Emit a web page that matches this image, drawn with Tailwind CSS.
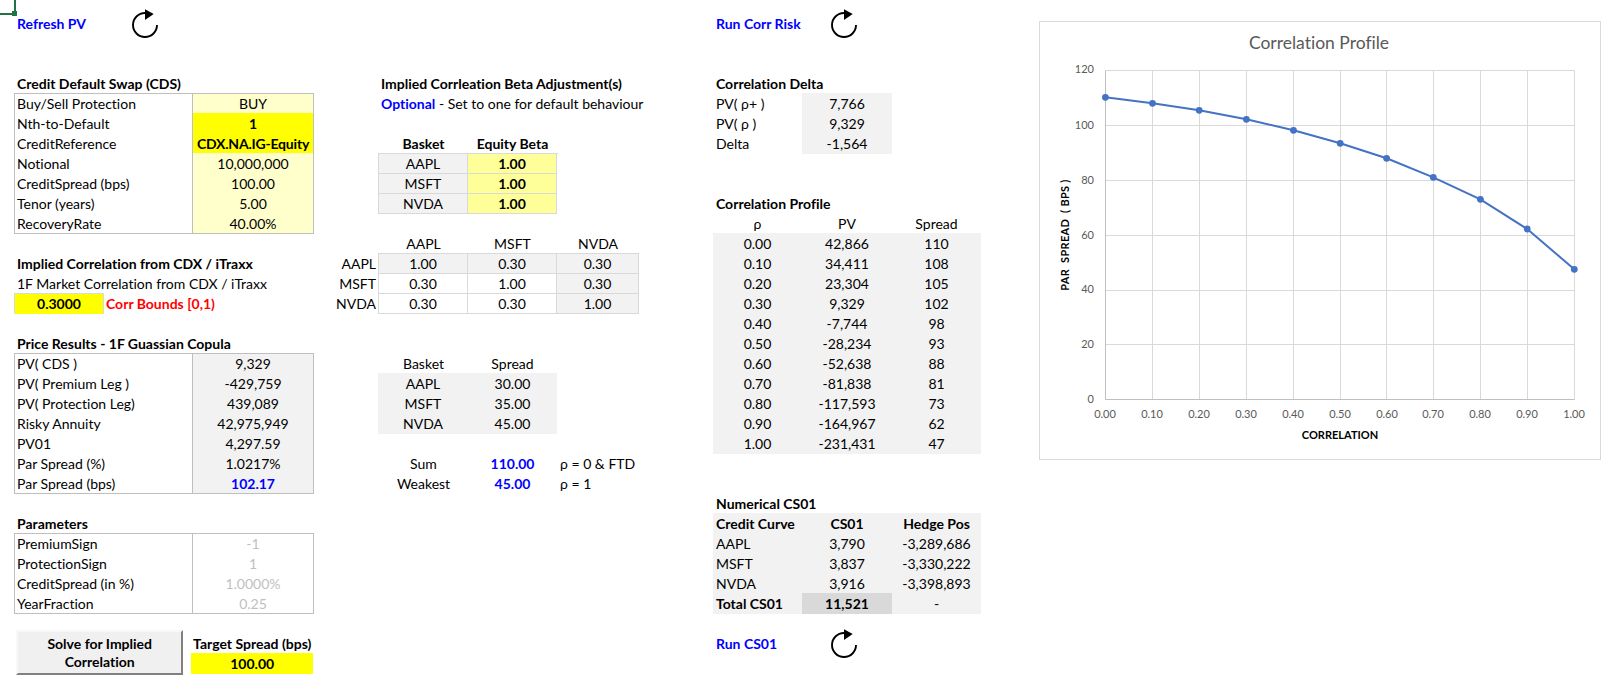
<!doctype html>
<html><head><meta charset="utf-8"><script src="https://cdn.jsdelivr.net/npm/@tailwindcss/browser@4"></script></head>
<body>
<div class="relative flex w-[1621px] h-[691px] overflow-hidden bg-white pt-[14px] pl-[15px] font-['Lato',sans-serif] text-[14px] leading-5 text-black [font-variant-ligatures:none]">

<div class="absolute left-[14px] top-0 w-[2px] h-[12px] bg-[#217346]"></div>
<div class="absolute left-0 top-[13px] w-[13px] h-[2px] bg-[#217346]"></div>
<div class="absolute left-[12px] top-[11px] w-[5px] h-[5px] bg-[#217346]"></div>

<!-- Column A -->
<div class="w-[298px] shrink-0">
  <div class="flex h-5">
    <div class="w-[116px] pl-[2px] font-bold text-[#0000ff]">Refresh PV</div>
    <svg class="w-7 h-[30px] -mt-[6px] shrink-0" viewBox="0 0 28 30" fill="none"><path d="M14 5A12 12 0 1 0 26 17" stroke="#000" stroke-width="1.9"/><path d="M14 1.3 22.7 6 14 12z" fill="#000"/></svg>
  </div>
  <div class="h-[40px]"></div>
  <div class="h-5 pl-[2px] font-bold">Credit Default Swap (CDS)</div>
  <div class="flex -ml-px -mt-px h-[141px] w-[300px] border border-[#bfbfbf]">
    <div class="w-[178px] h-[139px] border-r border-[#bfbfbf] pl-[2px]">
      <div class="h-5">Buy/Sell Protection</div>
      <div class="h-5">Nth-to-Default</div>
      <div class="h-5">CreditReference</div>
      <div class="h-5">Notional</div>
      <div class="h-5">CreditSpread (bps)</div>
      <div class="h-5">Tenor (years)</div>
      <div class="h-5">RecoveryRate</div>
    </div>
    <div class="w-[120px] h-[139px] bg-[#ffffcc] text-center">
      <div class="h-5">BUY</div>
      <div class="-mt-px pt-px mb-px h-[40px] bg-[#ffff00] font-bold">
        <div class="h-5">1</div>
        <div class="h-5 whitespace-nowrap tracking-[-0.2px]">CDX.NA.IG-Equity</div>
      </div>
      <div class="h-5">10,000,000</div>
      <div class="h-5">100.00</div>
      <div class="h-5">5.00</div>
      <div class="h-5">40.00%</div>
    </div>
  </div>
  <div class="h-5"></div>
  <div class="h-5 pl-[2px] font-bold">Implied Correlation from CDX / iTraxx</div>
  <div class="h-5 pl-[2px]">1F Market Correlation from CDX / iTraxx</div>
  <div class="flex -ml-px -mt-px h-[21px]">
    <div class="w-[90px] h-[21px] border border-b-0 border-[#d9d9d9] bg-[#ffff00] text-center font-bold">0.3000</div>
    <div class="pl-[2px] pt-px font-bold text-[#ff0000]">Corr Bounds [0,1)</div>
  </div>
  <div class="h-5"></div>
  <div class="h-5 pl-[2px] font-bold">Price Results - 1F Guassian Copula</div>
  <div class="flex -ml-px -mt-px h-[141px] w-[300px] border border-[#bfbfbf]">
    <div class="w-[178px] h-[139px] border-r border-[#bfbfbf] pl-[2px]">
      <div class="h-5">PV( CDS )</div>
      <div class="h-5">PV( Premium Leg )</div>
      <div class="h-5">PV( Protection Leg)</div>
      <div class="h-5">Risky Annuity</div>
      <div class="h-5">PV01</div>
      <div class="h-5">Par Spread (%)</div>
      <div class="h-5">Par Spread (bps)</div>
    </div>
    <div class="w-[120px] h-[139px] bg-[#f2f2f2] text-center">
      <div class="h-5">9,329</div>
      <div class="h-5">-429,759</div>
      <div class="h-5">439,089</div>
      <div class="h-5">42,975,949</div>
      <div class="h-5">4,297.59</div>
      <div class="h-5">1.0217%</div>
      <div class="h-5 font-bold text-[#0000ff]">102.17</div>
    </div>
  </div>
  <div class="h-5"></div>
  <div class="h-5 pl-[2px] font-bold">Parameters</div>
  <div class="flex -ml-px -mt-px h-[81px] w-[300px] border border-[#bfbfbf]">
    <div class="w-[178px] h-[79px] border-r border-[#bfbfbf] pl-[2px]">
      <div class="h-5">PremiumSign</div>
      <div class="h-5">ProtectionSign</div>
      <div class="h-5">CreditSpread (in %)</div>
      <div class="h-5">YearFraction</div>
    </div>
    <div class="w-[120px] h-[79px] text-center text-[#bfbfbf]">
      <div class="h-5">-1</div>
      <div class="h-5">1</div>
      <div class="h-5">1.0000%</div>
      <div class="h-5">0.25</div>
    </div>
  </div>
  <div class="flex mt-[16px]">
    <button class="w-[168px] h-[45px] ml-px border-2 border-t-[#f8f8f8] border-l-[#f8f8f8] border-r-[#808080] border-b-[#808080] bg-[#f0f0f0] text-center font-bold leading-[18px]">Solve for Implied<br>Correlation</button>
    <div class="w-[122px] ml-[8px] pt-[4px] text-center">
      <div class="h-5 font-bold whitespace-nowrap">Target Spread (bps)</div>
      <div class="-mt-px pt-px h-[21px] bg-[#ffff00] font-bold">100.00</div>
    </div>
  </div>
</div>

<!-- Column B -->
<div class="w-[400px] shrink-0">
  <div class="h-[60px]"></div>
  <div class="h-5 pl-[68px] font-bold">Implied Corrleation Beta Adjustment(s)</div>
  <div class="h-5 pl-[68px]"><span class="font-bold text-[#0000ff]">Optional</span> - Set to one for default behaviour</div>
  <div class="h-5"></div>
  <div class="ml-[66px] grid grid-cols-[89px_89px] h-5 text-center font-bold"><div>Basket</div><div>Equity Beta</div></div>
  <div class="ml-[65px] -mt-px w-[180px] border-l border-t border-[#d9d9d9] grid grid-cols-[89px_89px] text-center">
    <div class="h-5 border-r border-b border-[#d9d9d9] bg-[#f2f2f2]">AAPL</div><div class="h-5 border-r border-b border-[#d9d9d9] bg-[#ffff99] font-bold">1.00</div>
    <div class="h-5 border-r border-b border-[#d9d9d9] bg-[#f2f2f2]">MSFT</div><div class="h-5 border-r border-b border-[#d9d9d9] bg-[#ffff99] font-bold">1.00</div>
    <div class="h-5 border-r border-b border-[#d9d9d9] bg-[#f2f2f2]">NVDA</div><div class="h-5 border-r border-b border-[#d9d9d9] bg-[#ffff99] font-bold">1.00</div>
  </div>
  <div class="h-5"></div>
  <div class="ml-[66px] grid grid-cols-[89px_89px_82px] h-5 text-center"><div>AAPL</div><div>MSFT</div><div>NVDA</div></div>
  <div class="flex -mt-px">
    <div class="w-[63px] pt-px text-right">
      <div class="h-5">AAPL</div><div class="h-5">MSFT</div><div class="h-5">NVDA</div>
    </div>
    <div class="ml-[2px] w-[261px] border-l border-t border-[#d9d9d9] grid grid-cols-[89px_89px_82px] text-center">
      <div class="h-5 border-r border-b border-[#d9d9d9] bg-[#f2f2f2]">1.00</div><div class="h-5 border-r border-b border-[#d9d9d9] bg-[#f2f2f2]">0.30</div><div class="h-5 border-r border-b border-[#d9d9d9] bg-[#f2f2f2]">0.30</div>
      <div class="h-5 border-r border-b border-[#d9d9d9]">0.30</div><div class="h-5 border-r border-b border-[#d9d9d9]">1.00</div><div class="h-5 border-r border-b border-[#d9d9d9] bg-[#f2f2f2]">0.30</div>
      <div class="h-5 border-r border-b border-[#d9d9d9]">0.30</div><div class="h-5 border-r border-b border-[#d9d9d9]">0.30</div><div class="h-5 border-r border-b border-[#d9d9d9] bg-[#f2f2f2]">1.00</div>
    </div>
  </div>
  <div class="h-[40px]"></div>
  <div class="ml-[66px] grid grid-cols-[89px_89px] h-5 text-center"><div>Basket</div><div>Spread</div></div>
  <div class="ml-[65px] w-[179px] -mt-px pt-px bg-[#f2f2f2] grid grid-cols-[90px_89px] text-center">
    <div class="h-5">AAPL</div><div class="h-5">30.00</div>
    <div class="h-5">MSFT</div><div class="h-5">35.00</div>
    <div class="h-5">NVDA</div><div class="h-5">45.00</div>
  </div>
  <div class="h-5"></div>
  <div class="ml-[66px] grid grid-cols-[89px_89px_100px] text-center">
    <div class="h-5">Sum</div><div class="h-5 font-bold text-[#0000ff]">110.00</div><div class="h-5 pl-[3px] text-left">ρ = 0 &amp; FTD</div>
    <div class="h-5">Weakest</div><div class="h-5 font-bold text-[#0000ff]">45.00</div><div class="h-5 pl-[3px] text-left">ρ = 1</div>
  </div>
</div>

<!-- Column C -->
<div class="w-[326px] shrink-0">
  <div class="flex h-5">
    <div class="w-[117px] pl-[3px] font-bold text-[#0000ff]">Run Corr Risk</div>
    <svg class="w-7 h-[30px] -mt-[6px] shrink-0" viewBox="0 0 28 30" fill="none"><path d="M14 5A12 12 0 1 0 26 17" stroke="#000" stroke-width="1.9"/><path d="M14 1.3 22.7 6 14 12z" fill="#000"/></svg>
  </div>
  <div class="h-[40px]"></div>
  <div class="h-5 pl-[3px] font-bold">Correlation Delta</div>
  <div class="grid grid-cols-[89px_90px] w-[179px] -mt-px pt-px text-center">
    <div class="h-5 pl-[3px] text-left">PV( ρ+ )</div><div class="h-[21px] -mt-px pt-px bg-[#f2f2f2]">7,766</div>
    <div class="h-5 pl-[3px] text-left">PV( ρ )</div><div class="h-5 bg-[#f2f2f2]">9,329</div>
    <div class="h-5 pl-[3px] text-left">Delta</div><div class="h-5 bg-[#f2f2f2]">-1,564</div>
  </div>
  <div class="h-[40px]"></div>
  <div class="h-5 pl-[3px] font-bold">Correlation Profile</div>
  <div class="grid grid-cols-[89px_90px_89px] w-[268px] h-5 text-center"><div>ρ</div><div>PV</div><div>Spread</div></div>
  <div class="grid grid-cols-[89px_90px_89px] w-[268px] -mt-px pt-px bg-[#f2f2f2] text-center">
    <div class="h-5">0.00</div><div class="h-5">42,866</div><div class="h-5">110</div>
    <div class="h-5">0.10</div><div class="h-5">34,411</div><div class="h-5">108</div>
    <div class="h-5">0.20</div><div class="h-5">23,304</div><div class="h-5">105</div>
    <div class="h-5">0.30</div><div class="h-5">9,329</div><div class="h-5">102</div>
    <div class="h-5">0.40</div><div class="h-5">-7,744</div><div class="h-5">98</div>
    <div class="h-5">0.50</div><div class="h-5">-28,234</div><div class="h-5">93</div>
    <div class="h-5">0.60</div><div class="h-5">-52,638</div><div class="h-5">88</div>
    <div class="h-5">0.70</div><div class="h-5">-81,838</div><div class="h-5">81</div>
    <div class="h-5">0.80</div><div class="h-5">-117,593</div><div class="h-5">73</div>
    <div class="h-5">0.90</div><div class="h-5">-164,967</div><div class="h-5">62</div>
    <div class="h-5">1.00</div><div class="h-5">-231,431</div><div class="h-5">47</div>
  </div>
  <div class="h-[40px]"></div>
  <div class="h-5 pl-[3px] font-bold">Numerical CS01</div>
  <div class="grid grid-cols-[89px_90px_89px] w-[268px] -mt-px pt-px bg-[#f2f2f2] text-center">
    <div class="h-5 pl-[3px] text-left font-bold">Credit Curve</div><div class="h-5 font-bold">CS01</div><div class="h-5 font-bold">Hedge Pos</div>
    <div class="h-5 pl-[3px] text-left">AAPL</div><div class="h-5">3,790</div><div class="h-5">-3,289,686</div>
    <div class="h-5 pl-[3px] text-left">MSFT</div><div class="h-5">3,837</div><div class="h-5">-3,330,222</div>
    <div class="h-5 pl-[3px] text-left">NVDA</div><div class="h-5">3,916</div><div class="h-5">-3,398,893</div>
    <div class="h-5 pl-[3px] text-left font-bold">Total CS01</div><div class="h-[21px] -mt-px pt-px bg-[#d9d9d9] font-bold">11,521</div><div class="h-5">-</div>
  </div>
  <div class="h-5"></div>
  <div class="flex h-5">
    <div class="w-[117px] pl-[3px] font-bold text-[#0000ff]">Run CS01</div>
    <svg class="w-7 h-[30px] -mt-[6px] shrink-0" viewBox="0 0 28 30" fill="none"><path d="M14 5A12 12 0 1 0 26 17" stroke="#000" stroke-width="1.9"/><path d="M14 1.3 22.7 6 14 12z" fill="#000"/></svg>
  </div>
</div>

<!-- Chart -->
<div class="mt-[7px] w-[562px] h-[439px] shrink-0 border border-[#d9d9d9] bg-white">
  <svg class="block w-[560px] h-[437px]" viewBox="1040 22 560 437" font-family="Lato, sans-serif">
    <g stroke="#d9d9d9" stroke-width="1" fill="none">
      <path d="M1105.5 70.5H1574.5M1105.5 125.5H1574.5M1105.5 180.5H1574.5M1105.5 235.5H1574.5M1105.5 290.5H1574.5M1105.5 344.5H1574.5"/>
      <path d="M1152.5 70.5V399.5M1199.5 70.5V399.5M1246.5 70.5V399.5M1293.5 70.5V399.5M1340.5 70.5V399.5M1386.5 70.5V399.5M1433.5 70.5V399.5M1480.5 70.5V399.5M1527.5 70.5V399.5M1574.5 70.5V399.5"/>
    </g>
    <path d="M1105.5 70.5V399.5H1574.5" stroke="#bfbfbf" fill="none"/>
    <polyline points="1105.4,97.3 1152.5,103.3 1199.2,110.3 1246.4,119.3 1293.5,130.3 1340.2,143.3 1386.6,158.3 1433.3,177.3 1480.4,199.3 1527.2,229 1574.3,269.3" fill="none" stroke="#4472c4" stroke-width="2"/>
    <g fill="#4472c4">
      <circle cx="1105.4" cy="97.3" r="3.4"/><circle cx="1152.5" cy="103.3" r="3.4"/><circle cx="1199.2" cy="110.3" r="3.4"/><circle cx="1246.4" cy="119.3" r="3.4"/><circle cx="1293.5" cy="130.3" r="3.4"/><circle cx="1340.2" cy="143.3" r="3.4"/><circle cx="1386.6" cy="158.3" r="3.4"/><circle cx="1433.3" cy="177.3" r="3.4"/><circle cx="1480.4" cy="199.3" r="3.4"/><circle cx="1527.2" cy="229" r="3.4"/><circle cx="1574.3" cy="269.3" r="3.4"/>
    </g>
    <text x="1319" y="49" text-anchor="middle" font-size="17.5" fill="#595959">Correlation Profile</text>
    <g font-size="11" fill="#595959" text-anchor="end">
      <text x="1094" y="73">120</text><text x="1094" y="129">100</text><text x="1094" y="184">80</text><text x="1094" y="239">60</text><text x="1094" y="293">40</text><text x="1094" y="348">20</text><text x="1094" y="403">0</text>
    </g>
    <g font-size="11" fill="#595959" text-anchor="middle">
      <text x="1105" y="418">0.00</text><text x="1152" y="418">0.10</text><text x="1199" y="418">0.20</text><text x="1246" y="418">0.30</text><text x="1293" y="418">0.40</text><text x="1340" y="418">0.50</text><text x="1387" y="418">0.60</text><text x="1433" y="418">0.70</text><text x="1480" y="418">0.80</text><text x="1527" y="418">0.90</text><text x="1574" y="418">1.00</text>
    </g>
    <text x="1340" y="439" text-anchor="middle" font-size="11" font-weight="700" fill="#000">CORRELATION</text>
    <text transform="translate(1069 235) rotate(-90)" text-anchor="middle" font-size="11" font-weight="700" letter-spacing="0.3" fill="#000">PAR&#160; SPREAD&#160; ( BPS )</text>
  </svg>
</div>

</div>
</body></html>
